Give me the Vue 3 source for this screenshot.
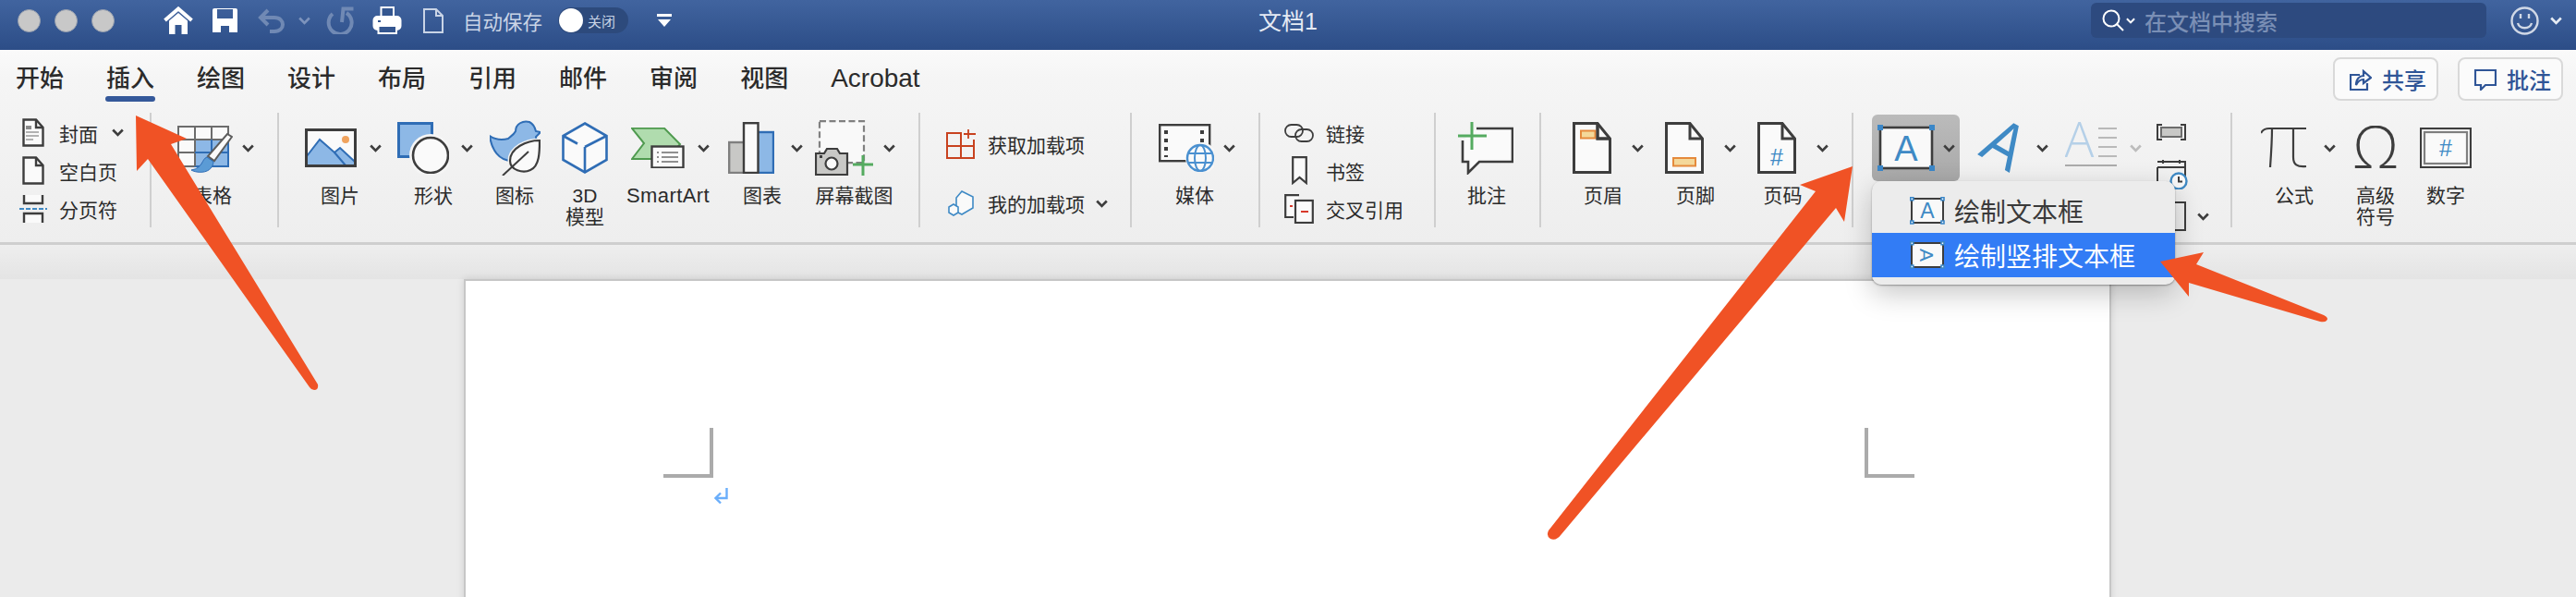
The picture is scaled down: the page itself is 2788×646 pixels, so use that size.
<script setup>
const tabs = ["开始", "插入", "绘图", "设计", "布局", "引用", "邮件", "审阅", "视图", "Acrobat"];
</script>

<template>
	<div class="app">
		<!-- shared small caret -->
		<svg class="defs" width="0" height="0">
			<symbol id="caret" viewBox="0 0 13 9">
				<polyline points="1.2,1.5 6.5,7 11.8,1.5" fill="none" stroke="currentColor" stroke-width="2.6" />
			</symbol>
			<symbol id="page" viewBox="0 0 42 56">
				<path d="M1.5 1.5H27L40.5 18V54.5H1.5Z" fill="#fafafa" stroke="#3d3d3d" stroke-width="3" />
				<path d="M27 1.5V18H40.5" fill="none" stroke="#3d3d3d" stroke-width="3" />
			</symbol>
		</svg>

		<header class="titlebar">
			<div class="tb-left">
				<div class="lights"><i></i><i></i><i></i></div>
				<svg class="q-home" width="32" height="30" viewBox="0 0 32 30">
					<path d="M1.5 15L16 2.5L30.5 15" fill="none" stroke="#fff" stroke-width="4" />
					<path d="M6 15.5L16 7L26 15.5V30H19.5V20H12.5V30H6Z" fill="#fff" />
				</svg>
				<svg class="q-save" width="27" height="26" viewBox="0 0 27 26">
					<path fill-rule="evenodd" d="M0 2Q0 0 2 0H25Q27 0 27 2V26H0ZM5 1V11H22V1ZM9 19V26H18V19Z" fill="#fff" />
				</svg>
				<svg class="q-undo" width="30" height="27" viewBox="0 0 30 27" fill="none" stroke="#7089b4" stroke-width="4">
					<path d="M11 2L3 10L11 18" />
					<path d="M3 10H18C30 10 30 25 18 25H13" />
				</svg>
				<svg class="q-caret" width="13" height="9"><use href="#caret" /></svg>
				<svg class="q-redo" width="30" height="30" viewBox="0 0 30 30" fill="none" stroke="#7089b4" stroke-width="4">
					<path d="M7 8A12.5 12.5 0 1 0 22 7" />
					<path d="M29.5 2.5H18.5L17 17" />
				</svg>
				<svg class="q-print" width="32" height="30" viewBox="0 0 32 30">
					<rect x="9.5" y="1" width="13.5" height="11" fill="#34568f" stroke="#fff" stroke-width="2" />
					<rect x="1.5" y="11" width="29" height="14" rx="4" fill="#fff" stroke="#fff" stroke-width="2" />
					<rect x="6.5" y="21" width="19.5" height="8" fill="#34568f" stroke="#fff" stroke-width="2" />
					<rect x="6" y="15" width="3" height="2" fill="#34568f" />
				</svg>
				<svg class="q-doc" width="22" height="27" viewBox="0 0 22 27" fill="none" stroke="#c9d4e6" stroke-width="2">
					<path d="M1 1H14L21 8V26H1Z" />
					<path d="M14 1V8H21" />
				</svg>
				<span class="autosave">自动保存</span>
				<div class="toggle"><i></i><span>关闭</span></div>
				<svg class="q-more" width="16" height="14" viewBox="0 0 16 14">
					<rect x="0" y="0" width="16" height="3" fill="#fff" />
					<path d="M1 6H15L8 14Z" fill="#fff" />
				</svg>
			</div>
			<div class="doc-title">文档1</div>
			<div class="tb-right">
				<div class="search">
					<svg width="24" height="24" viewBox="0 0 24 24" fill="none" stroke="#fff" stroke-width="2">
						<circle cx="10" cy="10" r="8.5" />
						<path d="M16 16L23 23" />
					</svg>
					<svg class="search-caret" width="10" height="7"><use href="#caret" /></svg>
					<span>在文档中搜索</span>
				</div>
				<svg class="smiley" width="31" height="31" viewBox="0 0 31 31" fill="none" stroke="#d0d8e6" stroke-width="2.4">
					<circle cx="15.5" cy="15.5" r="14" />
					<path d="M8 18C10 25 21 25 23 18" />
					<path d="M11 8V13M20 8V13" />
				</svg>
				<svg class="smiley-caret" width="13" height="9"><use href="#caret" /></svg>
			</div>
		</header>

		<div class="ribbon-wrap">
			<nav class="tabrow">
				<div
					v-for="tab in tabs"
					:key="tab"
					class="tab"
					:class="{ active: tab === '插入', latin: tab === 'Acrobat' }"
				>
					{{ tab }}
				</div>
				<div class="actions">
					<button class="act">
						<svg width="24" height="23" viewBox="0 0 24 23" fill="none" stroke="#2f5597" stroke-width="2.2">
							<path d="M11 6H1V22H19V15" />
							<path d="M7 17C7 10 11 7 15 7V2L23 9L15 15V11C12 11 9 13 7 17Z" />
						</svg>
						<span>共享</span>
					</button>
					<button class="act">
						<svg width="24" height="23" viewBox="0 0 24 23" fill="none" stroke="#2f5597" stroke-width="2.2">
							<path d="M1 1H23V17H12L7 22V17H1Z" />
						</svg>
						<span>批注</span>
					</button>
				</div>
			</nav>

			<section class="ribbon">
				<div class="group g1 rows">
					<div class="row">
						<span class="ico"><svg width="24" height="31" viewBox="0 0 24 31">
							<path d="M1.5 1.5H15L22.5 10V29.5H1.5Z" fill="#fafafa" stroke="#3d3d3d" stroke-width="2.4" />
							<path d="M15 1.5V10H22.5" fill="none" stroke="#3d3d3d" stroke-width="2.4" />
							<rect x="4" y="8" width="6" height="4" fill="#8b8b8b" />
							<path d="M4 15H18M4 19H18M4 23H12" stroke="#9a9a9a" stroke-width="1.6" />
						</svg></span>
						<span class="rt">封面</span>
						<svg class="rc" width="13" height="9"><use href="#caret" /></svg>
					</div>
					<div class="row">
						<span class="ico"><svg width="24" height="31" viewBox="0 0 24 31">
							<path d="M1.5 1.5H15L22.5 10V29.5H1.5Z" fill="#fafafa" stroke="#3d3d3d" stroke-width="2.4" />
							<path d="M15 1.5V10H22.5" fill="none" stroke="#3d3d3d" stroke-width="2.4" />
						</svg></span>
						<span class="rt">空白页</span>
					</div>
					<div class="row">
						<span class="ico"><svg width="30" height="30" viewBox="0 0 30 30">
							<path d="M5 0V9H25V0" fill="#fafafa" stroke="#3d3d3d" stroke-width="2.4" />
							<path d="M0 15H30" stroke="#3f8ac5" stroke-width="2" stroke-dasharray="5 2" />
							<path d="M5 30V20H25V30" fill="#fafafa" stroke="#3d3d3d" stroke-width="2.4" />
						</svg></span>
						<span class="rt">分页符</span>
					</div>
				</div>

				<div class="group g2">
					<div class="big it-table">
						<div class="big-top">
							<svg width="60" height="56" viewBox="0 0 60 56">
								<rect x="1" y="5" width="54" height="43" fill="#fafafa" stroke="#6c6c6c" stroke-width="2" />
								<rect x="19" y="19" width="36" height="29" fill="#8db8e6" stroke="#2f6db5" stroke-width="2" />
								<path d="M19 5V48M37 5V48M1 19H55M1 33H55" stroke="#6c6c6c" stroke-width="2" />
								<path d="M37 19V48M19 33H55" stroke="#2f6db5" stroke-width="2" />
								<path d="M59 16L40 42L33 37L54 13Z" fill="#fafafa" stroke="#5c5c5c" stroke-width="2" />
								<path d="M32 38C26 40 28 50 15 52C22 56 38 56 39 43Z" fill="#5b9bd5" stroke="#2f6db5" />
							</svg>
							<svg width="13" height="9"><use href="#caret" /></svg>
						</div>
						<div class="big-label">表格</div>
					</div>
				</div>

				<div class="group g3">
					<div class="big it-pic">
						<div class="big-top">
							<svg width="56" height="42" viewBox="0 0 56 42">
								<rect x="1.5" y="1.5" width="53" height="39" fill="#fafafa" />
								<path d="M2 30L16 12L32 26L38 21L54 36V40H2Z" fill="#8db8e6" stroke="#2f6db5" stroke-width="2" />
								<path d="M32 26L44 40" stroke="#2f6db5" stroke-width="2" />
								<circle cx="44" cy="12" r="4" fill="#f0a35e" />
								<rect x="1.5" y="1.5" width="53" height="39" fill="none" stroke="#3d3d3d" stroke-width="3" />
							</svg>
							<svg width="13" height="9"><use href="#caret" /></svg>
						</div>
						<div class="big-label">图片</div>
					</div>
					<div class="big it-shape">
						<div class="big-top">
							<svg width="56" height="56" viewBox="0 0 56 56">
								<rect x="1.5" y="1.5" width="36" height="36" fill="#8db8e6" stroke="#2f6db5" stroke-width="3" />
								<ellipse cx="36" cy="36" rx="23" ry="23" fill="#f5f5f5" />
								<ellipse cx="36" cy="36" rx="19" ry="19" fill="#fafafa" stroke="#3d3d3d" stroke-width="2.6" />
							</svg>
							<svg width="13" height="9"><use href="#caret" /></svg>
						</div>
						<div class="big-label">形状</div>
					</div>
					<div class="big it-icon">
						<div class="big-top">
							<svg width="55" height="60" viewBox="0 0 55 60">
								<path d="M0 17C6 21 12 22 20 20C22 18 26 16 28 12C28 4 36 0 43 2C47 4 49 8 50 12L55 13L50 18C52 28 46 44 24 44C10 44 2 32 0 17Z" fill="#8db8e6" stroke="#2f6db5" stroke-width="2" />
								<path d="M54 22C40 22 22 30 22 44C22 54 36 58 44 54C54 50 54 34 54 22Z" fill="#fafafa" stroke="#f2f2f2" stroke-width="5" />
								<path d="M54 22C40 22 22 30 22 44C22 54 36 58 44 54C54 50 54 34 54 22Z" fill="#fafafa" stroke="#3d3d3d" stroke-width="2.2" />
								<path d="M14 60L42 34" stroke="#3d3d3d" stroke-width="2" fill="none" />
							</svg>
						</div>
						<div class="big-label">图标</div>
					</div>
					<div class="big it-3d">
						<div class="big-top">
							<svg width="50" height="56" viewBox="0 0 50 56" fill="#fafafa" stroke="#2f6db5" stroke-width="2.6">
								<path d="M25 1.5L48.5 15V41L25 54.5L1.5 41V15Z" />
								<path d="M25 27L48.5 15M25 27V54.5M1.5 15L17 23.5" fill="none" />
							</svg>
						</div>
						<div class="big-label">3D<br />模型</div>
					</div>
					<div class="big it-smart">
						<div class="big-top">
							<svg width="58" height="44" viewBox="0 0 58 44">
								<path d="M1 0.8H36L53 18L40 34H1L14 17Z" fill="#b0dcae" stroke="#4f9a4f" stroke-width="2" />
								<rect x="22.5" y="20.5" width="34" height="23" fill="#fafafa" stroke="#3d3d3d" stroke-width="2.4" />
								<path d="M28 27H30M33 27H51M28 32H30M33 32H51M28 37H30M33 37H51" stroke="#6c6c6c" stroke-width="1.6" />
							</svg>
							<svg width="13" height="9"><use href="#caret" /></svg>
						</div>
						<div class="big-label latin">SmartArt</div>
					</div>
					<div class="big it-chart">
						<div class="big-top">
							<svg width="50" height="56" viewBox="0 0 50 56">
								<rect x="1.2" y="22" width="17" height="33" fill="#c8c8c6" stroke="#7f7f7f" stroke-width="2.4" />
								<rect x="32" y="11" width="17" height="44" fill="#8db8e6" stroke="#2f6db5" stroke-width="2.4" />
								<rect x="17" y="1.2" width="15.5" height="53.8" fill="#fafafa" stroke="#3d3d3d" stroke-width="2.4" />
							</svg>
							<svg width="13" height="9"><use href="#caret" /></svg>
						</div>
						<div class="big-label">图表</div>
					</div>
					<div class="big it-shot">
						<div class="big-top">
							<svg width="64" height="60" viewBox="0 0 64 60">
								<rect x="5" y="1.2" width="48" height="45" fill="#f9f9f9" stroke="#808080" stroke-width="2.2" stroke-dasharray="7 3.5" />
								<path d="M1 36H10L13 31H24L27 36H35V59H1Z" fill="#c8c8c6" stroke="#3d3d3d" stroke-width="2.2" />
								<circle cx="18" cy="47" r="6.5" fill="#fafafa" stroke="#3d3d3d" stroke-width="2.2" />
								<rect x="5" y="38" width="3" height="3" fill="#3d3d3d" />
								<path d="M52 38V60M41 48H63" stroke="#55ab60" stroke-width="3" />
							</svg>
							<svg width="13" height="9"><use href="#caret" /></svg>
						</div>
						<div class="big-label">屏幕截图</div>
					</div>
				</div>

				<div class="group g4">
					<div class="addin">
						<span class="addin-ico"><svg width="32" height="32" viewBox="0 0 32 32" fill="none" stroke="#c8421f" stroke-width="2">
							<path d="M17 4H1V31H30V11" />
							<path d="M1 18H30M16 4V31" />
							<path d="M24 0V10M19 5H32" stroke-width="1.8" />
						</svg></span>
						<span class="addin-text">获取加载项</span>
					</div>
					<div class="addin">
						<span class="addin-ico"><svg width="28" height="28" viewBox="0 0 28 28" fill="none" stroke="#3f8ac5" stroke-width="1.6">
							<path d="M15 1L27 7V19L15 26L9 23V8Z" fill="#fafafa" />
							<path d="M6 15L11 18V24L6 27L1 24V18Z" fill="#fafafa" />
						</svg></span>
						<span class="addin-text">我的加载项</span>
						<svg class="rc2" width="13" height="9"><use href="#caret" /></svg>
					</div>
				</div>

				<div class="group g5">
					<div class="big it-media">
						<div class="big-top">
							<svg width="60" height="52" viewBox="0 0 60 52">
								<rect x="1.2" y="1.2" width="54" height="39" fill="#fafafa" stroke="#3d3d3d" stroke-width="2.4" />
								<path d="M8 7V36M47 7V20" stroke="#3d3d3d" stroke-width="4" stroke-dasharray="4 5" />
								<circle cx="46" cy="37" r="17" fill="#f6f6f6" />
								<circle cx="45" cy="37" r="14" fill="#fafafa" stroke="#4a90d0" stroke-width="2.4" />
								<ellipse cx="45" cy="37" rx="6" ry="14" fill="none" stroke="#4a90d0" stroke-width="2" />
								<path d="M32 32H58M32 42H58" stroke="#4a90d0" stroke-width="2" />
							</svg>
							<svg width="13" height="9"><use href="#caret" /></svg>
						</div>
						<div class="big-label">媒体</div>
					</div>
				</div>

				<div class="group g6 rows">
					<div class="row">
						<span class="ico"><svg width="32" height="20" viewBox="0 0 32 20" fill="none" stroke="#3d3d3d" stroke-width="1.8">
							<rect x="1" y="1" width="19" height="13" rx="6.5" />
							<rect x="12" y="6" width="19" height="13" rx="6.5" />
						</svg></span>
						<span class="rt">链接</span>
					</div>
					<div class="row">
						<span class="ico"><svg width="17" height="31" viewBox="0 0 17 31">
							<path d="M1.2 1.2H15.8V29L8.5 23L1.2 29Z" fill="#fafafa" stroke="#3d3d3d" stroke-width="2.2" />
						</svg></span>
						<span class="rt">书签</span>
					</div>
					<div class="row">
						<span class="ico"><svg width="32" height="32" viewBox="0 0 32 32">
							<path d="M16 1.2H1.2V25H10" fill="#fafafa" stroke="#3d3d3d" stroke-width="2.2" />
							<rect x="12" y="7" width="18.8" height="24" fill="#fafafa" stroke="#3d3d3d" stroke-width="2.2" />
							<path d="M6 13H9M18 19H26" stroke="#d8392b" stroke-width="2.2" />
						</svg></span>
						<span class="rt">交叉引用</span>
					</div>
				</div>

				<div class="group g7">
					<div class="big it-comment">
						<div class="big-top">
							<svg width="60" height="57" viewBox="0 0 60 57">
								<path d="M5 20V43H11V55L23 43H59V7H20" fill="#fafafa" stroke="#3d3d3d" stroke-width="2.6" />
								<path d="M15 0V30M0 15H31" stroke="#55ab60" stroke-width="3" />
							</svg>
						</div>
						<div class="big-label">批注</div>
					</div>
				</div>

				<div class="group g8">
					<div class="big it-head">
						<div class="big-top">
							<svg width="42" height="56" viewBox="0 0 42 56">
								<use href="#page" width="42" height="56" />
								<rect x="9" y="9.5" width="15.5" height="8" fill="#f4d89a" stroke="#e58a3c" stroke-width="2" />
								<path d="M27 1.5V18H40.5" fill="none" stroke="#3d3d3d" stroke-width="3" />
							</svg>
							<svg width="13" height="9"><use href="#caret" /></svg>
						</div>
						<div class="big-label">页眉</div>
					</div>
					<div class="big it-foot">
						<div class="big-top">
							<svg width="42" height="56" viewBox="0 0 42 56">
								<use href="#page" width="42" height="56" />
								<rect x="9" y="39" width="24" height="8.5" fill="#f4d89a" stroke="#e58a3c" stroke-width="2" />
							</svg>
							<svg width="13" height="9"><use href="#caret" /></svg>
						</div>
						<div class="big-label">页脚</div>
					</div>
					<div class="big it-pnum">
						<div class="big-top">
							<svg width="42" height="56" viewBox="0 0 42 56">
								<use href="#page" width="42" height="56" />
								<text x="21" y="47" class="hash" font-size="25">#</text>
							</svg>
							<svg width="13" height="9"><use href="#caret" /></svg>
						</div>
						<div class="big-label">页码</div>
					</div>
				</div>

				<div class="group g9">
					<div class="tbox-btn">
						<svg width="62" height="50" viewBox="0 0 62 50">
							<rect x="3" y="3" width="56" height="44" fill="#f9f9f9" stroke="#3d3d3d" stroke-width="2.6" />
							<text x="31" y="39" class="letter" font-size="38">A</text>
							<path d="M0 0h6v6H0zM56 0h6v6h-6zM0 44h6v6H0zM56 44h6v6h-6z" fill="#3b87c8" />
						</svg>
						<svg width="13" height="9"><use href="#caret" /></svg>
					</div>
					<div class="tool t-art">
						<svg width="46" height="56" viewBox="0 0 46 56">
							<text class="art" font-size="60" transform="matrix(0.875 0.5 -0.593 1.025 0 35)">A</text>
						</svg>
						<svg width="13" height="9"><use href="#caret" /></svg>
					</div>
					<div class="tool t-drop">
						<svg width="56" height="56" viewBox="0 0 56 56">
							<text x="15.5" y="38" class="faded" font-size="53">A</text>
							<path d="M36 7H56M36 17H56M36 27H56M36 37H56" stroke="#b9b9b9" stroke-width="2" />
							<path d="M0 47H56" stroke="#ababab" stroke-width="2" />
						</svg>
						<svg class="soft" width="13" height="9"><use href="#caret" /></svg>
					</div>
					<div class="side">
						<svg width="32" height="18" viewBox="0 0 32 18">
							<path d="M6 1H1V17H6M26 1H31V17H26" fill="none" stroke="#3d3d3d" stroke-width="2" />
							<rect x="5" y="4" width="22" height="10" fill="#c8c8c6" stroke="#6c6c6c" stroke-width="2" />
						</svg>
						<svg width="34" height="32" viewBox="0 0 34 32">
							<path d="M1 8H31V20M1 8V30H18M1 2H31V8M7 0V4M25 0V4" fill="none" stroke="#3d3d3d" stroke-width="2" />
							<circle cx="24" cy="23" r="8.5" fill="#fafafa" stroke="#3f8ac5" stroke-width="2.4" />
							<path d="M24 18V23.5H28" fill="none" stroke="#3d3d3d" stroke-width="2" />
						</svg>
						<div class="side-last">
							<svg width="32" height="32" viewBox="0 0 32 32">
								<rect x="1" y="1" width="30" height="30" fill="none" stroke="#3d3d3d" stroke-width="2" />
							</svg>
							<svg width="13" height="9"><use href="#caret" /></svg>
						</div>
					</div>
				</div>

				<div class="group g10">
					<div class="big it-pi">
						<div class="big-top">
							<svg width="50" height="46" viewBox="0 0 50 46" fill="none" stroke="#3d3d3d" stroke-width="2.2">
								<path d="M0 7C2 3 5 2 9 2H49" />
								<path d="M12 2C12 16 11 30 10 44" />
								<path d="M35 2V33C35 41 39 44 49 43" />
							</svg>
							<svg width="13" height="9"><use href="#caret" /></svg>
						</div>
						<div class="big-label">公式</div>
					</div>
					<div class="big it-omega">
						<div class="big-top">
							<svg width="46" height="48" viewBox="0 0 46 48">
								<text x="23" y="46" class="omega" font-size="64">Ω</text>
							</svg>
						</div>
						<div class="big-label">高级<br />符号</div>
					</div>
					<div class="big it-digit">
						<div class="big-top">
							<svg width="56" height="44" viewBox="0 0 56 44">
								<rect x="1" y="1" width="54" height="42" fill="#fafafa" stroke="#3d3d3d" stroke-width="2.2" />
								<rect x="5" y="5" width="46" height="34" fill="#fafafa" stroke="#7f7f7f" stroke-width="2.2" />
								<text x="28" y="31" class="hash" font-size="25">#</text>
							</svg>
						</div>
						<div class="big-label">数字</div>
					</div>
				</div>
			</section>
		</div>

		<main class="canvas">
			<div class="page">
				<div class="mark mark-l"></div>
				<div class="mark mark-r"></div>
				<svg class="para" width="15" height="18" viewBox="0 0 15 18" fill="none" stroke="#6aaefb" stroke-width="2.4">
					<path d="M13.5 0V11H2" />
					<path d="M7 5.5L1.5 11L7 16.5" />
				</svg>
			</div>
		</main>

		<div class="menu">
			<div class="menu-item">
				<svg width="38" height="30" viewBox="0 0 38 30">
					<rect x="2" y="2" width="34" height="26" fill="#f9f9f9" stroke="#3d3d3d" stroke-width="2" />
					<text x="19" y="23" class="letter" font-size="23">A</text>
					<path d="M0.8 0.8h3v3h-3zM34 0.8h3v3h-3zM0.8 26h3v3h-3zM34 26h3v3h-3z" fill="#fafafa" stroke="#3b87c8" stroke-width="1.6" />
				</svg>
				<span>绘制文本框</span>
			</div>
			<div class="menu-item on">
				<svg width="38" height="30" viewBox="0 0 38 30">
					<rect x="2" y="2" width="34" height="26" fill="#f9f9f9" stroke="#3d3d3d" stroke-width="2" />
					<text x="0" y="0" class="letter" font-size="21" transform="translate(11 15) rotate(90)">A</text>
					<path d="M0.8 0.8h3v3h-3zM34 0.8h3v3h-3zM0.8 26h3v3h-3zM34 26h3v3h-3z" fill="#fafafa" stroke="#3b87c8" stroke-width="1.6" />
				</svg>
				<span>绘制竖排文本框</span>
			</div>
		</div>

		<svg class="arrows" width="2788" height="646" viewBox="0 0 2788 646">
			<path d="M147 125L202 150L185 156L344 416Q345 422 340 422Q337 422 335 419L160 172L148 185Z" />
			<path d="M2005 180L1996 240L1987 225L1690 578Q1684 586 1678 583Q1673 580 1676 574L1965 207L1948 200Z" />
			<path d="M2338 283L2385 273L2377 286L2515 341Q2521 344 2518 347Q2516 349 2511 348L2369 306L2369 321Z" />
		</svg>
	</div>
</template>

<style scoped>
.app {
	position: relative;
	width: 2788px;
	height: 646px;
	overflow: hidden;
	display: flex;
	flex-direction: column;
	font-family: "Liberation Sans", "Noto Sans CJK SC", sans-serif;
	color: #2b2b2b;
	background: #ebebeb;
}

.defs {
	position: absolute;
}

svg {
	display: block;
	flex: none;
	color: #3d3d3d;
}

/* title bar */
.titlebar {
	height: 54px;
	flex: none;
	display: grid;
	grid-template-columns: 1fr auto 1fr;
	background: linear-gradient(#41649f, #2c4d87);
}

.tb-left,
.tb-right {
	height: 44px;
	display: flex;
	align-items: center;
}

.tb-right {
	justify-content: flex-end;
	padding-right: 15px;
}

.lights {
	display: flex;
	gap: 15px;
	margin-left: 19px;
}

.lights i {
	width: 25px;
	height: 25px;
	box-sizing: border-box;
	border-radius: 50%;
	background: #c8c8c8;
	border: 1px solid #98a0ae;
}

.q-home { margin-left: 53px; }
.q-save { margin-left: 21px; }
.q-undo { margin-left: 22px; }
.q-caret { margin-left: 14px; color: #7d93bc; }
.q-redo { margin-left: 17px; }
.q-print { margin-left: 20px; }
.q-doc { margin-left: 23px; }
.q-more { margin-left: 31px; }

.autosave {
	margin-left: 21px;
	width: 86px;
	font-size: 21.5px;
	white-space: nowrap;
	color: #c9d4e6;
}

.toggle {
	margin-left: 17px;
	width: 76px;
	height: 28px;
	border-radius: 14px;
	background: #2d4a7c;
	display: flex;
	align-items: center;
	font-size: 15px;
	color: #c9d4e6;
}

.toggle i {
	width: 26px;
	height: 26px;
	margin-left: 1px;
	border-radius: 50%;
	background: #fff;
}

.toggle span {
	margin-left: 5px;
}

.doc-title {
	height: 46px;
	line-height: 46px;
	font-size: 25px;
	color: #e6ebf4;
}

.search {
	width: 428px;
	height: 38px;
	box-sizing: border-box;
	padding-left: 12px;
	border-radius: 6px;
	background: #2d4a7f;
	display: flex;
	align-items: center;
	font-size: 24px;
	font-weight: 500;
	color: #7a8fb5;
}

.search-caret {
	margin-left: 2px;
	color: #fff;
}

.search span {
	margin-left: 10px;
}

.smiley { margin-left: 26px; }
.smiley-caret { margin-left: 12px; color: #e6ebf4; }

/* tabs + ribbon */
.ribbon-wrap {
	flex: none;
	height: 211px;
	box-sizing: border-box;
	border-bottom: 3px solid #cfcfcf;
	background: linear-gradient(#fafafa, #f5f5f5 15%, #eeeeee);
}

.tabrow {
	height: 56px;
	display: flex;
	padding: 0 14px 0 17px;
}

.tab {
	position: relative;
	height: 56px;
	margin-right: 46px;
	font-size: 26px;
	font-weight: 500;
	line-height: 62px;
	white-space: nowrap;
}

.tab.latin {
	font-size: 28px;
	font-weight: 400;
}

.tab.active::after {
	content: "";
	position: absolute;
	left: -1px;
	right: -1px;
	bottom: 0;
	height: 6px;
	border-radius: 3px;
	background: #34589a;
}

.actions {
	margin-left: auto;
	display: flex;
	gap: 21px;
	padding-top: 8px;
}

.act {
	width: 114px;
	height: 47px;
	box-sizing: border-box;
	padding: 0 0 0 16px;
	border: 2px solid #d9d9d9;
	border-radius: 8px;
	background: #fbfbfb;
	display: flex;
	align-items: center;
	gap: 11px;
	font: inherit;
	font-size: 24px;
	font-weight: 500;
	color: #2f5597;
}

.act svg {
	margin-top: 2px;
}

.ribbon {
	display: flex;
	padding-top: 12px;
}

.group {
	height: 124px;
	flex: none;
	box-sizing: border-box;
	border-right: 2px solid #cfcfcf;
	display: flex;
}

.g1 { width: 164px; padding-left: 20px; }
.g2 { width: 138px; }
.g3 { width: 694px; }
.g4 { width: 229px; padding: 18px 0 0 28px; flex-direction: column; gap: 32px; }
.g5 { width: 139px; }
.g6 { width: 190px; padding-left: 26px; }
.g7 { width: 114px; }
.g8 { width: 338px; }
.g9 { width: 410px; }
.g10 { width: 372px; border-right: 0; }

.rows {
	flex-direction: column;
	padding-top: 1px;
}

.row {
	height: 44px;
	display: flex;
	align-items: center;
}

.ico {
	width: 32px;
	display: flex;
	justify-content: center;
}

.g1 .rt { margin-left: 12px; }
.g6 .rt { margin-left: 13px; }

.rt,
.addin-text {
	font-size: 21px;
	white-space: nowrap;
}

.rc { margin-left: 15px; }

.addin {
	height: 32px;
	display: flex;
	align-items: center;
}

.addin-ico {
	width: 32px;
	display: flex;
	justify-content: center;
}

.addin-text { margin-left: 13px; }
.rc2 { margin-left: 12px; }

.big {
	flex: none;
}

.big-top {
	height: 76px;
	display: flex;
	align-items: center;
}

.big-label {
	padding-top: 2px;
	font-size: 21px;
	line-height: 23px;
	text-align: center;
	white-space: nowrap;
}

.big-label.latin {
	font-size: 22px;
	letter-spacing: 0.4px;
}

.it-table { width: 88px; margin-left: 22px; }
.it-table .big-top { padding-left: 6px; gap: 10px; }
.it-pic { width: 96px; margin-left: 18px; }
.it-pic .big-top { padding-left: 10px; gap: 14px; }
.it-shape { width: 98px; margin-left: 4px; }
.it-shape .big-top { padding-left: 10px; gap: 13px; }
.it-icon { width: 60px; margin-left: 9px; }
.it-icon .big-top { padding-left: 3px; }
.it-3d { width: 60px; margin-left: 16px; }
.it-3d .big-top { padding-left: 5px; }
.it-smart { width: 96px; margin-left: 12px; }
.it-smart .big-top { padding-left: 8px; gap: 14px; }
.it-chart { width: 86px; margin-left: 11px; }
.it-chart .big-top { padding-left: 6px; gap: 18px; }
.it-shot { width: 89px; margin-left: 12px; }
.it-shot .big-top { padding-left: 2px; gap: 10px; }
.it-media { width: 88px; margin-left: 24px; }
.it-media .big-top { padding-left: 5px; gap: 10px; }
.it-comment { width: 70px; margin-left: 20px; }
.it-comment .big-top { padding-left: 4px; }
.it-head { width: 86px; margin-left: 24px; }
.it-foot { width: 86px; margin-left: 14px; }
.it-head .big-top,
.it-foot .big-top { padding-left: 10px; gap: 22px; }
.it-pnum { width: 97px; margin-left: 3px; }
.it-pnum .big-top { padding-left: 21px; gap: 22px; }
.it-pi { width: 86px; margin-left: 24px; }
.it-pi .big-top { padding-left: 7px; gap: 18px; }
.it-omega { width: 60px; margin-left: 15px; }
.it-omega .big-top { padding-left: 7px; }
.it-digit { width: 60px; margin-left: 16px; }
.it-digit .big-top { padding-left: 2px; }

.tbox-btn {
	width: 95px;
	height: 72px;
	margin: 2px 0 0 20px;
	box-sizing: border-box;
	padding-left: 6px;
	border-radius: 6px;
	background: linear-gradient(#bbbbbb, #a9a9a9);
	display: flex;
	align-items: center;
	gap: 9px;
}

.tool {
	height: 76px;
	display: flex;
	align-items: center;
}

.t-art { margin-left: 19px; gap: 18px; }
.t-drop { margin-left: 18px; gap: 14px; }
.soft { color: #bcbcbc; }

.side {
	margin-left: 16px;
	padding-top: 12px;
	display: flex;
	flex-direction: column;
	gap: 21px;
}

.side-last {
	display: flex;
	align-items: center;
	gap: 12px;
	margin-top: -8px;
}

.letter {
	fill: #3f8ac5;
	text-anchor: middle;
	font-family: "Liberation Sans", sans-serif;
}

.faded {
	fill: #b5d0e8;
	text-anchor: middle;
	font-family: "Open Sans", "Liberation Sans", sans-serif;
	font-weight: 300;
}

.art {
	fill: #3f8ac5;
	font-family: "Liberation Sans", sans-serif;
}

.hash {
	fill: #3f8ac5;
	text-anchor: middle;
	font-family: "Liberation Sans", sans-serif;
}

.omega {
	fill: #3d3d3d;
	text-anchor: middle;
	font-family: "Open Sans", "Liberation Sans", sans-serif;
	font-weight: 300;
}

/* document area */
.canvas {
	flex: 1;
	min-height: 0;
	padding: 37px 0 0 502px;
	background: linear-gradient(#eeeeee, #e4e4e4 37px, #ebebeb 37px);
}

.page {
	position: relative;
	width: 1783px;
	height: 400px;
	box-sizing: border-box;
	border: 2px solid #c6c6c6;
	border-bottom: 0;
	background: #fff;
	box-shadow: 0 0 8px rgba(0, 0, 0, 0.12);
}

.mark {
	position: absolute;
	top: 159px;
	width: 54px;
	height: 54px;
	box-sizing: border-box;
	border-bottom: 4px solid #ababab;
}

.mark-l {
	left: 214px;
	border-right: 4px solid #ababab;
}

.mark-r {
	left: 1514px;
	border-left: 4px solid #ababab;
}

.para {
	position: absolute;
	left: 269px;
	top: 224px;
}

/* dropdown */
.menu {
	position: absolute;
	left: 2026px;
	top: 196px;
	z-index: 5;
	width: 328px;
	box-sizing: border-box;
	padding: 8px 0;
	border-radius: 10px;
	background: #ececec;
	box-shadow: 0 1px 2px rgba(0, 0, 0, 0.35), 0 10px 30px rgba(0, 0, 0, 0.22);
}

.menu-item {
	height: 48px;
	box-sizing: border-box;
	padding-left: 41px;
	display: flex;
	align-items: center;
	gap: 10px;
	font-size: 28px;
	color: #3a3a3a;
}

.menu-item.on {
	background: #327cf5;
	color: #fff;
}

.arrows {
	position: absolute;
	left: 0;
	top: 0;
	z-index: 10;
	pointer-events: none;
	fill: #f05225;
}
</style>

<style>
html,
body {
	margin: 0;
	overflow: hidden;
}
</style>
